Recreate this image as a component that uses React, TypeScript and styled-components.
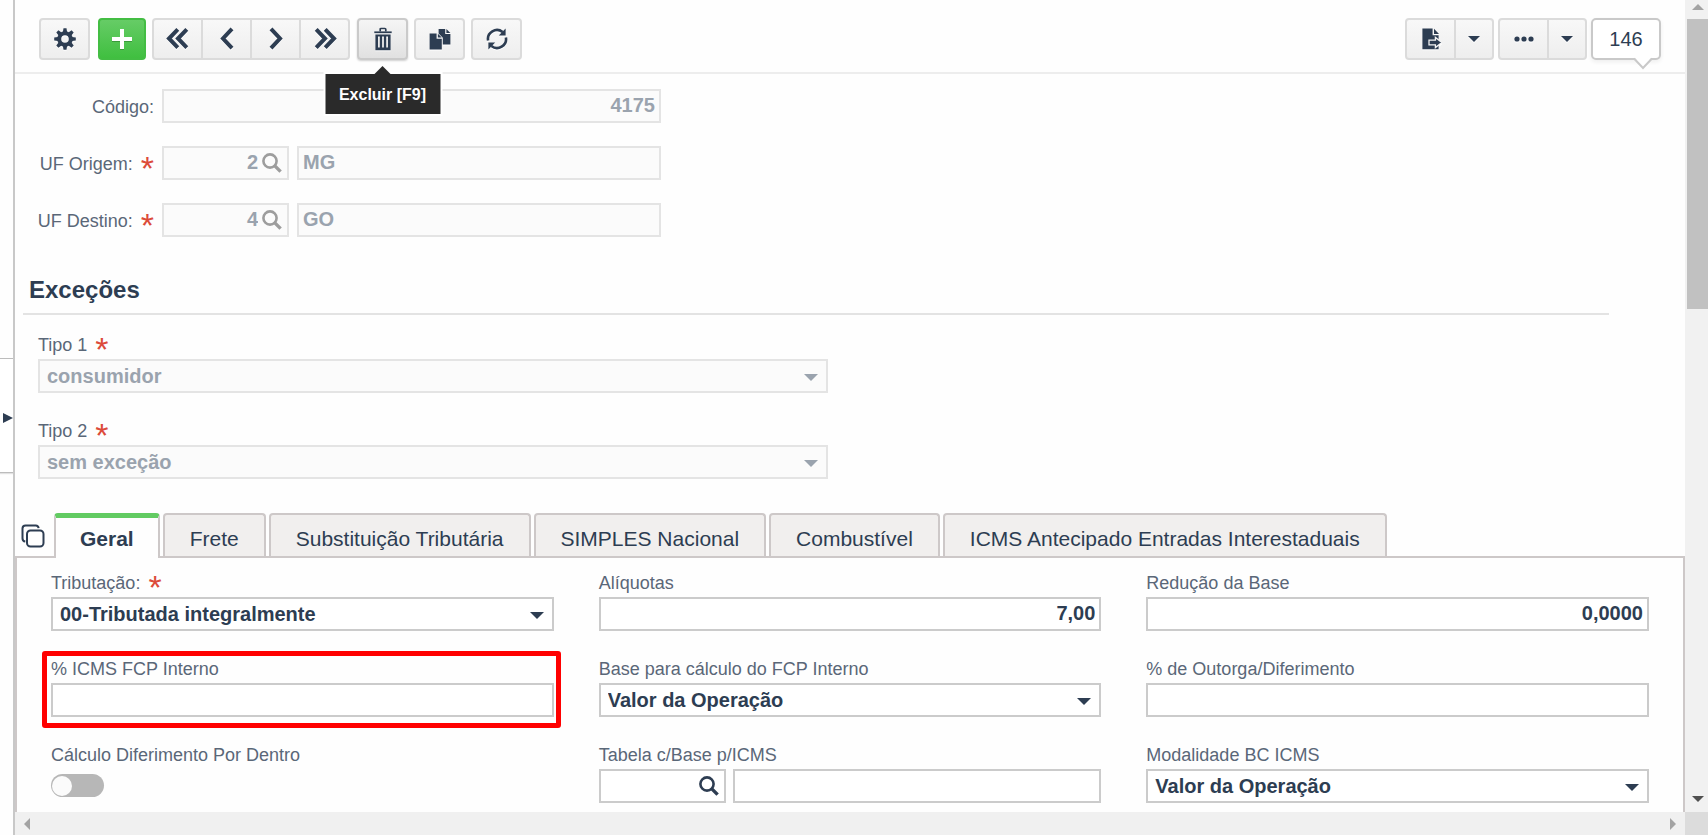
import React, { useId, useState } from "react";
import styled, { createGlobalStyle, css } from "styled-components";

const ink = "#2d3d52";
const labelInk = "#5a6778";
const muted = "#9aa3ae";
const line = "#cbcbcb";
const lineSoft = "#e4e4e4";
const tabLine = "#cdc8c8";

const GlobalStyle = createGlobalStyle`
  *, *::before, *::after { box-sizing: border-box; }
  body { margin: 0; background: #fff; }
  body, button, input, select {
    font-family: "Liberation Sans", Arial, Helvetica, sans-serif;
    color: ${ink};
  }
`;

/* ---------- Page frame ---------- */

const Shell = styled.div`
  display: grid;
  grid-template-columns: 13px minmax(0, 1fr);
  height: 100vh;
  overflow: hidden;
  background: #fefefe;
`;

const Rail = styled.aside`
  display: grid;
  align-content: center;
  padding-bottom: 4px;
`;

const RailHandle = styled.button`
  display: flex;
  align-items: center;
  justify-content: flex-end;
  width: 100%;
  height: 115px;
  padding: 4px 0 0;
  border: 0;
  border-top: 1px solid #bcbcbc;
  border-bottom: 1px solid #bcbcbc;
  background: #fff;
  box-shadow: 0 1px 1px #e2e2e2;
`;

const Workspace = styled.div`
  display: grid;
  grid-template-columns: minmax(0, 1fr) 23px;
  grid-template-rows: minmax(0, 1fr) 23px;
  min-height: 0;
  border-left: 2px solid #c8c8c8;
`;

const Content = styled.main`
  display: flex;
  flex-direction: column;
  min-height: 0;
  overflow: hidden;
`;

const VerticalTrack = styled.div`
  display: flex;
  flex-direction: column;
  align-items: center;
  padding: 4px 0 10px 2px;
  background: #f1f1f1;
`;

const VerticalThumb = styled.div`
  align-self: stretch;
  height: 290px;
  margin: 9px 0 auto;
  background: #c1c1c1;
`;

const HorizontalTrack = styled.div`
  display: flex;
  align-items: center;
  justify-content: space-between;
  padding: 0 9px;
  background: #f0f0f0;
`;

const TrackCorner = styled.div`
  background: #dcdcdc;
`;

/* ---------- Toolbar ---------- */

const Toolbar = styled.header`
  display: flex;
  flex: none;
  justify-content: space-between;
  padding: 18px 24px 12px;
  border-bottom: 2px solid #ededed;
`;

const ToolCluster = styled.div<{ $gap: number }>`
  display: flex;
  gap: ${(p) => p.$gap}px;
`;

const ButtonGroup = styled.div`
  display: flex;
  padding-right: 1px;

  button + button {
    margin-left: -2px;
    border-top-left-radius: 0;
    border-bottom-left-radius: 0;
  }
  button:not(:last-child) {
    border-top-right-radius: 0;
    border-bottom-right-radius: 0;
  }
`;

const ToolButton = styled.button<{ $tone?: "green" | "active"; $narrow?: boolean }>`
  display: flex;
  align-items: center;
  justify-content: center;
  width: ${(p) => (p.$narrow ? 40 : 51)}px;
  height: 42px;
  padding: 0;
  border: 2px solid #dbdbdb;
  border-radius: 4px;
  background: linear-gradient(#f8f8f8, #eeeeee);
  color: ${ink};

  svg {
    filter: drop-shadow(0 1px 0 #fff);
  }

  ${(p) =>
    p.$tone === "green" &&
    css`
      width: 48px;
      border-color: #43bd43;
      background: linear-gradient(#66cc66, #40bf40);
      color: #fff;
      svg {
        filter: drop-shadow(0 1px 0 #3a9a3a);
      }
    `}

  ${(p) =>
    p.$tone === "active" &&
    css`
      border-color: #cacaca;
      background: linear-gradient(#f5f5f5, #e1e1e1);
      box-shadow: 0 1px 2px #d0d0d0;
    `}
`;

const StartGroup = styled.div`
  display: flex;
  gap: 8px;
`;

const TooltipAnchor = styled.div`
  position: relative;
`;

const Tooltip = styled.div`
  position: absolute;
  z-index: 2;
  top: 56px;
  left: 50%;
  transform: translateX(-50%);
  width: 115px;
  height: 40px;
  background: #2a2a2a;
  box-shadow: 0 0 0 2px #fff;
  color: #fff;
  font-size: 16px;
  font-weight: 700;
  line-height: 42px;
  text-align: center;
  white-space: nowrap;

  &::before {
    content: "";
    position: absolute;
    top: -8px;
    left: 50%;
    margin-left: -8px;
    border: 8px solid transparent;
    border-top: 0;
    border-bottom-color: #2a2a2a;
  }
`;

const Counter = styled.output`
  position: relative;
  width: 70px;
  height: 42px;
  border: 2px solid #c9c9c9;
  border-radius: 5px;
  background: #fff;
  box-shadow: 0 2px 4px #eeeeee;
  font-size: 20px;
  line-height: 38px;
  text-align: center;

  svg {
    position: absolute;
    top: 37px;
    right: 6px;
  }
`;

/* ---------- Fields ---------- */

const HeaderForm = styled.div`
  display: grid;
  grid-template-columns: 147px minmax(0, 499fr) 1024fr;
  row-gap: 23px;
  padding-top: 15px;
`;

const SideLabel = styled.label`
  grid-column: 1;
  display: flex;
  align-items: center;
  justify-content: flex-end;
  gap: 8px;
  padding: 2px 8px 0 0;
  color: ${labelInk};
  font-size: 18px;
  line-height: 20px;
  white-space: nowrap;
`;

const SideField = styled.div`
  grid-column: 2;
`;

const Star = styled.span`
  height: 20px;
  color: #dc4b3a;
  font-size: 34px;
  line-height: 28px;
`;

const Box = styled.div<{ $disabled?: boolean; $width?: number }>`
  position: relative;
  display: flex;
  align-items: center;
  flex: ${(p) => (p.$width ? `0 0 ${p.$width}px` : "1 1 0")};
  min-width: 0;
  height: 34px;
  border: 2px solid ${(p) => (p.$disabled ? lineSoft : line)};
  background: ${(p) => (p.$disabled ? "#fbfbfb" : "#fff")};
  color: ${(p) => (p.$disabled ? muted : ink)};
`;

const controlText = css`
  width: 100%;
  min-width: 0;
  height: 100%;
  border: 0;
  outline: 0;
  border-radius: 0;
  background: transparent;
  color: inherit;
  font-size: 20px;
  font-weight: 700;
  opacity: 1;
`;

const Input = styled.input<{ $right?: boolean }>`
  ${controlText}
  padding: 0 4px 2px;
  text-align: ${(p) => (p.$right ? "right" : "left")};
`;

const Select = styled.select`
  ${controlText}
  appearance: none;
  padding: 0 34px 0 7px;
`;

const SelectArrow = styled.span`
  position: absolute;
  top: 13px;
  right: 8px;
  display: flex;
  pointer-events: none;
`;

const LensButton = styled.button<{ $disabled?: boolean }>`
  display: flex;
  flex: none;
  margin-right: 5px;
  padding: 0;
  border: 0;
  background: none;
  color: ${(p) => (p.$disabled ? "#9d9d9d" : ink)};
`;

const Pair = styled.div<{ $gap: number }>`
  display: flex;
  gap: ${(p) => p.$gap}px;
`;

const Field = styled.div`
  position: relative;
  min-width: 0;
`;

const Label = styled.label`
  display: flex;
  gap: 8px;
  margin-bottom: 4px;
  color: ${labelInk};
  font-size: 18px;
  line-height: 20px;
  white-space: nowrap;
`;

const Highlight = styled.div`
  position: absolute;
  inset: -8px -7px -11px -9px;
  border: 5px solid #ff0000;
  border-radius: 3px;
  pointer-events: none;
`;

const Switch = styled.input`
  appearance: none;
  display: flex;
  align-items: center;
  width: 53px;
  height: 23px;
  margin: 9px 0 0;
  padding: 0 1px;
  border-radius: 12px;
  background: #b7b7b7;

  &::before {
    content: "";
    width: 20px;
    height: 20px;
    border-radius: 10px;
    background: #fbfbfb;
  }
  &:checked {
    justify-content: flex-end;
    background: #5fcb5f;
  }
`;

/* ---------- Sections and tabs ---------- */

const SectionTitle = styled.h2`
  margin: 39px 76px 0 8px;
  padding: 0 6px 9px;
  border-bottom: 2px solid #e3e3e3;
  font-size: 24px;
  line-height: 28px;
`;

const TypeFields = styled.div`
  display: grid;
  grid-template-columns: minmax(0, 790fr) 857fr;
  row-gap: 28px;
  padding: 20px 0 34px 23px;

  > * {
    grid-column: 1;
  }
`;

const TabStrip = styled.div`
  display: flex;
  flex: none;
  gap: 3px;
  height: 45px;
  border-bottom: 2px solid ${tabLine};
`;

const TabLead = styled.button`
  display: flex;
  align-items: center;
  justify-content: center;
  width: 36px;
  height: 43px;
  padding: 2px 0 0;
  border: 0;
  background: none;
`;

const Tab = styled.button<{ $active?: boolean }>`
  height: 43px;
  padding: 6px 25px 0;
  border: 2px solid ${tabLine};
  border-bottom: 0;
  border-radius: 4px 4px 0 0;
  background: #f1efee;
  font-size: 21px;
  line-height: 32px;
  white-space: nowrap;

  ${(p) =>
    p.$active &&
    css`
      height: 45px;
      padding: 1px 24px 0;
      border-top: 5px solid #62cb62;
      background: #fefefe;
      font-weight: 700;
    `}
`;

const Panel = styled.section`
  display: grid;
  flex: 1 0 auto;
  grid-template-columns: repeat(3, minmax(0, 1fr));
  align-content: start;
  gap: 28px 45px;
  padding: 15px 34px 9px;
  border: solid ${tabLine};
  border-width: 0 2px;
`;

/* ---------- Icons ---------- */

const Triangle = ({ w, h, dir, fill = "currentColor" }: { w: number; h: number; dir: "up" | "down" | "left" | "right"; fill?: string }) => {
  const points = {
    up: `0,${h} ${w},${h} ${w / 2},0`,
    down: `0,0 ${w},0 ${w / 2},${h}`,
    left: `${w},0 ${w},${h} 0,${h / 2}`,
    right: `0,0 0,${h} ${w},${h / 2}`,
  }[dir];
  return (
    <svg width={w} height={h} aria-hidden="true">
      <polygon points={points} fill={fill} />
    </svg>
  );
};

const GearIcon = () => (
  <svg width="22" height="22" viewBox="-11 -11 22 22" aria-hidden="true">
    <circle r="5.8" fill="none" stroke="currentColor" strokeWidth="4" />
    {[0, 45, 90, 135, 180, 225, 270, 315].map((a) => (
      <path key={a} d="M-2.1-7 L-1.5-10.8 H1.5 L2.1-7Z" fill="currentColor" transform={`rotate(${a})`} />
    ))}
  </svg>
);

const PlusIcon = () => (
  <svg width="22" height="22" viewBox="0 0 22 22" aria-hidden="true">
    <path d="M11 1v20M1 11h20" stroke="currentColor" strokeWidth="4" />
  </svg>
);

const ChevronIcon = ({ double, flip }: { double?: boolean; flip?: boolean }) => (
  <svg width="24" height="24" viewBox="0 0 24 24" aria-hidden="true">
    <g transform={flip ? "translate(24 0) scale(-1 1)" : undefined} fill="none" stroke="currentColor" strokeWidth="4">
      {double ? <path d="M11.8 2.4 3 11.5l8.8 9.1M20.8 2.4 12 11.5l8.8 9.1" /> : <path d="M17 1.9 8 11.5l9 9.6" />}
    </g>
  </svg>
);

const TrashIcon = () => (
  <svg width="18" height="24" viewBox="0 0 18 24" aria-hidden="true">
    <path d="M6.2 4.6V2.4q0-.9.9-.9h3.8q.9 0 .9.9v2.2" fill="none" stroke="currentColor" strokeWidth="1.7" />
    <path d="M.3 4.4h17.4v1.8H.3z" fill="currentColor" />
    <path
      d="M1.4 7.4h15.2V23.2H1.4zM4 9.4v11.2h1.8V9.4zM8.1 9.4v11.2h1.8V9.4zM12.2 9.4v11.2H14V9.4z"
      fill="currentColor"
      fillRule="evenodd"
    />
  </svg>
);

const CopyIcon = () => (
  <svg width="22" height="22" viewBox="0 0 22 22" aria-hidden="true">
    <path d="M9.6 1h6.6v5h5.2v10.6h-7.6V9.8L9.6 5.6z" fill="currentColor" />
    <path d="M17.4 1l4 3.9h-4z" fill="currentColor" />
    <path d="M.6 5.4h7v5.4h5.2v10.6H.6z" fill="currentColor" />
    <path d="M8.9 5.8l3.8 3.8H8.9z" fill="currentColor" />
  </svg>
);

const RefreshIcon = () => (
  <svg width="22" height="22" viewBox="0 0 22 22" aria-hidden="true">
    <path d="M2.1 12.6A9 9 0 0 1 16.6 4" fill="none" stroke="currentColor" strokeWidth="2.6" />
    <path d="M19.9 9.4A9 9 0 0 1 5.4 18" fill="none" stroke="currentColor" strokeWidth="2.6" />
    <path d="M19.6.6v6.8h-6.8z" fill="currentColor" />
    <path d="M2.4 21.4v-6.8h6.8z" fill="currentColor" />
  </svg>
);

const ExportIcon = () => (
  <svg width="22" height="22" viewBox="0 0 22 22" aria-hidden="true">
    <path d="M2.4.6h10.2v6.6h6v14H2.4z" fill="currentColor" />
    <path d="M14 .8l5 5.2h-5z" fill="currentColor" />
    <path d="M9 12.2h6.4V9.4l6.4 5.1-6.4 5.1v-2.8H9z" fill="currentColor" stroke="#f3f3f3" strokeWidth="1.3" />
  </svg>
);

const DotsIcon = () => (
  <svg width="20" height="6" viewBox="0 0 20 6" aria-hidden="true">
    {[3, 10, 17].map((x) => (
      <circle key={x} cx={x} cy="3" r="2.6" fill="currentColor" />
    ))}
  </svg>
);

const LensIcon = () => (
  <svg width="20" height="20" viewBox="0 0 20 20" aria-hidden="true">
    <circle cx="8" cy="8" r="6.6" fill="none" stroke="currentColor" strokeWidth="2.6" />
    <path d="M12.6 12.6l6 6" stroke="currentColor" strokeWidth="3.4" />
  </svg>
);

const StackIcon = () => (
  <svg width="24" height="24" viewBox="0 0 24 24" fill="none" stroke={ink} strokeWidth="2" aria-hidden="true">
    <rect x="6" y="6.5" width="16.5" height="16" rx="3.5" />
    <path d="M17.6 4.2C17.4 2.4 16.2 1.5 14.8 1.5H4.6Q1.5 1.5 1.5 4.6v9.6q0 3 2.8 3.4" />
  </svg>
);

/* ---------- Composed controls ---------- */

type FieldProps = { label: string; required?: boolean; highlight?: boolean };

const TextField = ({ label, required, highlight, value = "" }: FieldProps & { value?: string }) => {
  const id = useId();
  return (
    <Field>
      <Label htmlFor={id}>
        {label}
        {required && <Star>*</Star>}
      </Label>
      <Box>
        <Input id={id} defaultValue={value} $right />
      </Box>
      {highlight && <Highlight />}
    </Field>
  );
};

const SelectField = ({ label, required, disabled, value }: FieldProps & { disabled?: boolean; value: string }) => {
  const id = useId();
  return (
    <Field>
      <Label htmlFor={id}>
        {label}
        {required && <Star>*</Star>}
      </Label>
      <Box $disabled={disabled}>
        <Select id={id} disabled={disabled} defaultValue={value}>
          <option>{value}</option>
        </Select>
        <SelectArrow>
          <Triangle w={14} h={7} dir="down" />
        </SelectArrow>
      </Box>
    </Field>
  );
};

const LookupField = ({ id, label, code = "", name = "", disabled, gap }: { id: string; label: string; code?: string; name?: string; disabled?: boolean; gap: number }) => (
  <Pair $gap={gap}>
    <Box $width={127} $disabled={disabled}>
      <Input id={id} defaultValue={code} disabled={disabled} $right />
      <LensButton type="button" aria-label={`Pesquisar ${label}`} disabled={disabled} $disabled={disabled}>
        <LensIcon />
      </LensButton>
    </Box>
    <Box $disabled={disabled}>
      <Input aria-label={`${label} descrição`} defaultValue={name} disabled={disabled} />
    </Box>
  </Pair>
);

const tabs = [
  "Geral",
  "Frete",
  "Substituição Tributária",
  "SIMPLES Nacional",
  "Combustível",
  "ICMS Antecipado Entradas Interestaduais",
];

export default function App() {
  const [active, setActive] = useState(tabs[0]);

  return (
    <>
      <GlobalStyle />
      <Shell>
        <Rail>
          <RailHandle type="button" aria-label="Expandir painel">
            <Triangle w={10} h={10} dir="right" />
          </RailHandle>
        </Rail>
        <Workspace>
          <Content>
            <Toolbar>
              <ToolCluster $gap={6}>
                <StartGroup>
                  <ToolButton aria-label="Configurações"><GearIcon /></ToolButton>
                  <ToolButton $tone="green" aria-label="Novo"><PlusIcon /></ToolButton>
                </StartGroup>
                <ButtonGroup>
                  <ToolButton aria-label="Primeiro"><ChevronIcon double /></ToolButton>
                  <ToolButton aria-label="Anterior"><ChevronIcon /></ToolButton>
                  <ToolButton aria-label="Próximo"><ChevronIcon flip /></ToolButton>
                  <ToolButton aria-label="Último"><ChevronIcon double flip /></ToolButton>
                </ButtonGroup>
                <TooltipAnchor>
                  <ToolButton $tone="active" aria-label="Excluir" aria-describedby="tip-excluir"><TrashIcon /></ToolButton>
                  <Tooltip role="tooltip" id="tip-excluir">Excluir [F9]</Tooltip>
                </TooltipAnchor>
                <ToolButton aria-label="Duplicar"><CopyIcon /></ToolButton>
                <ToolButton aria-label="Atualizar"><RefreshIcon /></ToolButton>
              </ToolCluster>
              <ToolCluster $gap={3}>
                <ButtonGroup>
                  <ToolButton aria-label="Exportar"><ExportIcon /></ToolButton>
                  <ToolButton $narrow aria-label="Opções de exportação"><Triangle w={12} h={6} dir="down" /></ToolButton>
                </ButtonGroup>
                <ButtonGroup>
                  <ToolButton aria-label="Mais"><DotsIcon /></ToolButton>
                  <ToolButton $narrow aria-label="Mais opções"><Triangle w={12} h={6} dir="down" /></ToolButton>
                </ButtonGroup>
                <Counter>
                  146
                  <svg width="20" height="13" viewBox="0 0 20 13" aria-hidden="true">
                    <path d="M1 0 10 10.5 19 0z" fill="#fff" />
                    <path d="M1 1.5 10 11 19 1.5" fill="none" stroke="#c9c9c9" strokeWidth="2" />
                  </svg>
                </Counter>
              </ToolCluster>
            </Toolbar>

            <HeaderForm>
              <SideLabel htmlFor="codigo">Código:</SideLabel>
              <SideField>
                <Box $disabled><Input id="codigo" defaultValue="4175" disabled $right /></Box>
              </SideField>
              <SideLabel htmlFor="uf-origem">UF Origem:<Star>*</Star></SideLabel>
              <SideField>
                <LookupField id="uf-origem" label="UF Origem" code="2" name="MG" disabled gap={8} />
              </SideField>
              <SideLabel htmlFor="uf-destino">UF Destino:<Star>*</Star></SideLabel>
              <SideField>
                <LookupField id="uf-destino" label="UF Destino" code="4" name="GO" disabled gap={8} />
              </SideField>
            </HeaderForm>

            <SectionTitle>Exceções</SectionTitle>
            <TypeFields>
              <SelectField label="Tipo 1" required disabled value="consumidor" />
              <SelectField label="Tipo 2" required disabled value="sem exceção" />
            </TypeFields>

            <TabStrip role="tablist">
              <TabLead type="button" aria-label="Abas"><StackIcon /></TabLead>
              {tabs.map((tab) => (
                <Tab key={tab} type="button" role="tab" aria-selected={tab === active} $active={tab === active} onClick={() => setActive(tab)}>
                  {tab}
                </Tab>
              ))}
            </TabStrip>

            <Panel role="tabpanel">
              <SelectField label="Tributação:" required value="00-Tributada integralmente" />
              <TextField label="Alíquotas" value="7,00" />
              <TextField label="Redução da Base" value="0,0000" />
              <TextField label="% ICMS FCP Interno" highlight />
              <SelectField label="Base para cálculo do FCP Interno" value="Valor da Operação" />
              <TextField label="% de Outorga/Diferimento" />
              <Field>
                <Label htmlFor="diferimento">Cálculo Diferimento Por Dentro</Label>
                <Switch id="diferimento" type="checkbox" role="switch" />
              </Field>
              <Field>
                <Label htmlFor="tabela">Tabela c/Base p/ICMS</Label>
                <LookupField id="tabela" label="Tabela" gap={7} />
              </Field>
              <SelectField label="Modalidade BC ICMS" value="Valor da Operação" />
            </Panel>
          </Content>

          <VerticalTrack aria-hidden="true">
            <Triangle w={12} h={6} dir="up" fill="#a3a3a3" />
            <VerticalThumb />
            <Triangle w={12} h={6} dir="down" fill="#505050" />
          </VerticalTrack>
          <HorizontalTrack aria-hidden="true">
            <Triangle w={6} h={12} dir="left" fill="#a3a3a3" />
            <Triangle w={6} h={12} dir="right" fill="#a3a3a3" />
          </HorizontalTrack>
          <TrackCorner />
        </Workspace>
      </Shell>
    </>
  );
}
